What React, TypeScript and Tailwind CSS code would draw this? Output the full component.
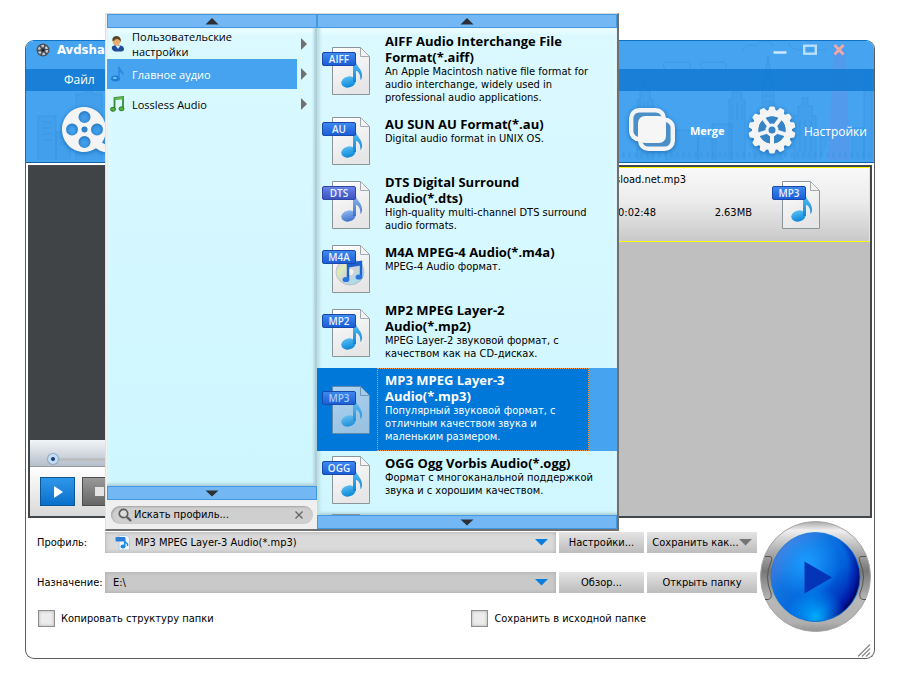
import type { ReactNode } from "react";

type Kind = "note" | "disc";

function FileIcon({ tag, kind = "note", dim = false }: { tag: string; kind?: Kind; dim?: boolean }) {
  const id = `${tag.toLowerCase()}${dim ? "-dim" : ""}`;
  const violet = tag === "DTS";
  return (
    <svg viewBox="0 0 48 48" className="block h-12 w-12 shrink-0" aria-hidden="true">
      <defs>
        <linearGradient id={`page-${id}`} x1="0" y1="0" x2="0.4" y2="1">
          <stop offset="0" stopColor="#ffffff" />
          <stop offset="1" stopColor="#e6e6e6" />
        </linearGradient>
        <linearGradient id={`tag-${id}`} x1="0" y1="0" x2="0" y2="1">
          <stop offset="0" stopColor={violet ? "#6a86e6" : "#3f8af0"} />
          <stop offset="1" stopColor={violet ? "#3a50c0" : "#1a5cd6"} />
        </linearGradient>
        <linearGradient id={`note-${id}`} x1="0" y1="0" x2="0" y2="1">
          <stop offset="0" stopColor={violet ? "#8fb8ee" : "#56bcf2"} />
          <stop offset="1" stopColor={violet ? "#4070cc" : "#0c86d8"} />
        </linearGradient>
        <linearGradient id={`disc-${id}`} x1="0" y1="0" x2="1" y2="1">
          <stop offset="0" stopColor="#d9c7ee" />
          <stop offset="0.3" stopColor="#dcecb8" />
          <stop offset="0.55" stopColor="#cdd2d8" />
          <stop offset="0.8" stopColor="#a9dcea" />
          <stop offset="1" stopColor="#b0b6bc" />
        </linearGradient>
      </defs>
      <g opacity={dim ? 0.68 : 1}>
        <path d="M10.5 .5H38.5L47.5 9.5V47.5H10.5Z" fill={`url(#page-${id})`} stroke="#8b9499" />
        <path d="M38.5 .5V9.5H47.5Z" fill="#f4f4f4" stroke="#a3aaae" strokeLinejoin="round" />
      </g>
      {kind === "note" ? (
        <g opacity={dim ? 0.85 : 1}>
          <ellipse cx="26.5" cy="35" rx="7.3" ry="5.5" transform="rotate(-14 26.5 35)" fill={`url(#note-${id})`} />
          <path
            d="M31 16.5 34 15C34.5 19.5 40.5 22 40 29.5 39.8 31.2 39.3 32.3 38.5 33.3 38.5 28 37.2 25 34 23.8V35H31Z"
            fill={`url(#note-${id})`}
          />
        </g>
      ) : (
        <g>
          <ellipse cx="28" cy="27" rx="14" ry="13" fill={`url(#disc-${id})`} stroke="#b4bbc0" strokeWidth="0.8" />
          <ellipse cx="28" cy="27" rx="4" ry="3.7" fill="#f3f3f3" stroke="#c4c4c4" strokeWidth="0.6" />
          <path d="M26 19 39 17V32M26 19V34" fill="none" stroke="#1c62cf" strokeWidth="2.4" />
          <path d="M25 21 40 18.5" stroke="#1c62cf" strokeWidth="3.6" />
          <ellipse cx="24" cy="34.5" rx="3.4" ry="2.6" fill="#2b74dd" />
          <ellipse cx="37" cy="32" rx="3.4" ry="2.6" fill="#2b74dd" />
        </g>
      )}
      <rect x="0.5" y="5.5" width="33" height="13" rx="1.5" fill={`url(#tag-${id})`} stroke={violet ? "#3346a5" : "#1a49ab"} />
      <text
        x="17"
        y="15.5"
        textAnchor="middle"
        fill={dim ? "#a9cdf3" : "#e8f1ff"}
        fontSize="10"
        fontWeight="600"
        fontFamily="'Open Sans', sans-serif"
      >
        {tag}
      </text>
    </svg>
  );
}

function Skyline() {
  return (
    <svg
      viewBox="0 0 848 122"
      preserveAspectRatio="xMaxYMax slice"
      className="pointer-events-none absolute inset-0 h-full w-full"
      fill="none"
      stroke="#2f8edb"
      strokeOpacity="0.4"
      aria-hidden="true"
    >
      <path d="M802 120 807 22V12L810 8H817L820 14V24L824 120Z" fill="#7d7fe0" fillOpacity="0.24" stroke="none" />
      <g fill="#3b99e6" fillOpacity="0.35">
        <path d="M12 120V76H30V120M30 120V92H44V120M50 120V54H60V46H66V54H76V120M16 82H26M16 88H26M16 94H26M16 100H26M34 98H40M34 104H40" />
        <path d="M611 120V60H614V50H618V42H620V50H624V60H627V120M614 62V76M618 62V76M622 62V76" />
        <path d="M640 120V90H672V120M672 120V98H690V120M703 120V60H706V52H716V60H719V120M706 64V80M711 64V80M716 64V80" />
        <path d="M686 120V84H706V120M728 120V90H736V50L740 28 742 16 744 28 748 50V90H756V120M738 50H747M738 56H747M738 62H747" />
        <path d="M768 120V76H772V66H776V58H782V66H786V76H790V120M774 80V112M779 80V112M785 80V112M794 120V96H804M826 120V88H838V120M838 120V30H846V120" />
      </g>
      <path d="M640 30H662Q668 26 661 22H642Q634 22 640 30ZM678 30H698Q704 26 697 22H678Q670 22 678 30ZM716 12Q720 2 730 6 740-4 748 6M764 2Q760 10 780 10H800" />
      <path strokeDasharray="3 3" d="M560 115H846" strokeWidth="5" strokeOpacity="0.25" />
    </svg>
  );
}

function Reel() {
  return (
    <svg viewBox="0 0 44 46" className="block h-[46px] w-11" aria-hidden="true">
      <path
        fillRule="evenodd"
        fill="#f4f4f4"
        d="M22 0C34 0 44 10 44 22.5C44 28 42.5 32 40 35.5L44 38V45C38 45 36 42 34 41.2C30.5 43.6 26 45 22 45C10 45 0 35 0 22.5C0 10 10 0 22 0ZM22.5 4A6 6 0 1 0 22.5 16A6 6 0 1 0 22.5 4ZM22.5 29A6 6 0 1 0 22.5 41A6 6 0 1 0 22.5 29ZM10 16.5A6 6 0 1 0 10 28.5A6 6 0 1 0 10 16.5ZM35 16.5A6 6 0 1 0 35 28.5A6 6 0 1 0 35 16.5ZM22.5 19.5A3 3 0 1 0 22.5 25.5A3 3 0 1 0 22.5 19.5Z"
      />
    </svg>
  );
}

function MergeIcon() {
  return (
    <svg viewBox="0 0 46 44" className="block h-11 w-[46px] shrink-0" aria-hidden="true">
      <rect x="2.2" y="2.2" width="32.6" height="29" rx="8" fill="#4c8fc6" stroke="#f4f4f4" strokeWidth="4.4" />
      <rect x="11.2" y="11.8" width="32.6" height="29" rx="8" fill="#4c8fc6" stroke="#f4f4f4" strokeWidth="4.4" />
      <rect x="9" y="8" width="28" height="27" rx="7" fill="#f6f6f6" />
    </svg>
  );
}

const TEETH = Array.from({ length: 14 }, (_, i) => (i * 360) / 14);
const SPOKES = [0, 72, 144, 216, 288];

function Gear() {
  return (
    <svg viewBox="0 0 48 48" className="block h-12 w-12 shrink-0" aria-hidden="true">
      <g transform="translate(24 24)">
        {TEETH.map((a) => (
          <path key={a} d="M-4.2-18-2.8-22.5Q-2.4-23.5-1.4-23.5H1.4Q2.4-23.5 2.8-22.5L4.2-18Z" fill="#f4f4f4" transform={`rotate(${a})`} />
        ))}
        <circle r="16.8" fill="none" stroke="#f4f4f4" strokeWidth="6.6" />
        <circle r="13.5" fill="#3584c6" />
        {SPOKES.map((a) => (
          <path key={a} d="M0-5V-15" stroke="#f4f4f4" strokeWidth="4" transform={`rotate(${a + 36})`} />
        ))}
        <circle r="5" fill="#3584c6" stroke="#f4f4f4" strokeWidth="3" />
      </g>
    </svg>
  );
}

function PlayBall() {
  return (
    <svg viewBox="0 0 111 111" className="block h-[111px] w-[111px]" aria-hidden="true">
      <defs>
        <linearGradient id="ring" x1="0" y1="0" x2="0" y2="1">
          <stop offset="0" stopColor="#a8a8a8" />
          <stop offset="0.08" stopColor="#efefef" />
          <stop offset="0.25" stopColor="#b4b4b4" />
          <stop offset="0.45" stopColor="#787878" />
          <stop offset="0.72" stopColor="#b8b8b8" />
          <stop offset="0.92" stopColor="#b0b0b0" />
          <stop offset="1" stopColor="#929292" />
        </linearGradient>
        <linearGradient id="ball" x1="0.2" y1="0.1" x2="0.9" y2="0.75">
          <stop offset="0" stopColor="#4a7cdc" />
          <stop offset="0.3" stopColor="#0f74e0" />
          <stop offset="0.65" stopColor="#0062dc" />
          <stop offset="1" stopColor="#0020b0" />
        </linearGradient>
        <radialGradient id="glowTop" cx="0.4" cy="0.34" r="0.38">
          <stop offset="0" stopColor="#1a9cff" />
          <stop offset="1" stopColor="#1a9cff" stopOpacity="0" />
        </radialGradient>
        <radialGradient id="glowBottom" cx="0.5" cy="0.95" r="0.34">
          <stop offset="0" stopColor="#00b0ff" />
          <stop offset="1" stopColor="#00a0ff" stopOpacity="0" />
        </radialGradient>
        <radialGradient id="shade" cx="0.35" cy="0.42" r="0.68">
          <stop offset="0.75" stopColor="#0018b0" stopOpacity="0" />
          <stop offset="0.9" stopColor="#000c90" stopOpacity="0.65" />
          <stop offset="1" stopColor="#000030" />
        </radialGradient>
      </defs>
      <circle cx="55.5" cy="55.5" r="55" fill="url(#ring)" stroke="#a5a5a5" />
      <path d="M5 35.5H10Q13 36 11 41Q4 56 11 72Q12 78 8 78.5H5M106 35.5H101Q98 36 100 41Q107 56 100 72Q99 78 103 78.5H106" fill="none" stroke="#555" />
      <circle cx="55.5" cy="56" r="44.5" fill="url(#ball)" />
      <circle cx="55.5" cy="56" r="44.5" fill="url(#glowTop)" />
      <circle cx="55.5" cy="56" r="44.5" fill="url(#shade)" />
      <circle cx="55.5" cy="56" r="44.5" fill="url(#glowBottom)" stroke="#1277d8" strokeWidth="0.8" />
      <path d="M44.5 40.5 72 56.5 44.5 72.5Z" fill="#0434b8" />
    </svg>
  );
}

function Tri({ dir }: { dir: "up" | "down" }) {
  return (
    <svg viewBox="0 0 14 7" className="block h-[7px] w-3.5" aria-hidden="true">
      <path d={dir === "up" ? "M7 0 13.5 6.5H.5Z" : "M7 6.5 13.5 .5H.5Z"} fill="#2d3136" />
    </svg>
  );
}

function ScrollBar({ dir, label }: { dir: "up" | "down"; label: string }) {
  return (
    <button
      type="button"
      aria-label={label}
      className="flex h-3.5 w-full shrink-0 items-center justify-center border border-[#4299e2] bg-[#73b8f4]"
    >
      <Tri dir={dir} />
    </button>
  );
}

const CATEGORIES: { text: string; on: boolean; icon: ReactNode }[] = [
  {
    text: "Пользовательские\nнастройки",
    on: false,
    icon: (
      <svg viewBox="0 0 16 16" className="h-4 w-4" aria-hidden="true">
        <path d="M2 10.5Q7 7 13 10.5Q15.5 14 12 15.5H5Q1 14 2 10.5Z" fill="#1d4d96" />
        <path d="M5 9 8 13 10.5 9.5Z" fill="#dbe8f7" />
        <ellipse cx="6.5" cy="5" rx="4" ry="4.6" fill="#e6b06c" />
        <path d="M2.5 5Q1.5 .5 6.5 0Q11.5 .5 10.8 6Q9.5 2.8 6 3Q4.5 5 2.5 5Z" fill="#5e4425" />
      </svg>
    ),
  },
  {
    text: "Главное аудио",
    on: true,
    icon: (
      <svg viewBox="0 0 16 16" className="h-4 w-4" aria-hidden="true">
        <ellipse cx="5.5" cy="12.5" rx="4.5" ry="3" fill="#1d7ed6" />
        <path d="M8.2 12.5V1L9.8 .5C10 4 14.5 5 13.5 9.5C12.5 7.5 11 6.5 9.8 6.5V12.5Z" fill="#2a8be0" />
        <ellipse cx="4.8" cy="12" rx="2" ry="1" fill="#7cc4f7" />
      </svg>
    ),
  },
  {
    text: "Lossless Audio",
    on: false,
    icon: (
      <svg viewBox="0 0 16 16" className="h-4 w-4" aria-hidden="true">
        <path d="M4.5 13V2L13 1V12.5" fill="none" stroke="#3a8a34" strokeWidth="1.8" />
        <path d="M4.5 3 13 2" stroke="#5fb54f" strokeWidth="2.6" />
        <ellipse cx="3" cy="13.3" rx="2.5" ry="2" fill="#52b43e" stroke="#2d7a2a" />
        <ellipse cx="11.5" cy="12.8" rx="2.5" ry="2" fill="#52b43e" stroke="#2d7a2a" />
      </svg>
    ),
  },
];

const FORMATS: { tag: string; title: string; desc: string; kind?: Kind; on?: boolean }[] = [
  {
    tag: "AIFF",
    title: "AIFF Audio Interchange File\nFormat(*.aiff)",
    desc: "An Apple Macintosh native file format for\naudio interchange, widely used in\nprofessional audio applications.",
  },
  { tag: "AU", title: "AU SUN AU Format(*.au)", desc: "Digital audio format in UNIX OS." },
  { tag: "DTS", title: "DTS Digital Surround\nAudio(*.dts)", desc: "High-quality multi-channel DTS surround\naudio formats." },
  { tag: "M4A", title: "M4A MPEG-4 Audio(*.m4a)", desc: "MPEG-4 Audio формат.", kind: "disc" },
  { tag: "MP2", title: "MP2 MPEG Layer-2\nAudio(*.mp2)", desc: "MPEG Layer-2 звуковой формат, с\nкачеством как на CD-дисках." },
  {
    tag: "MP3",
    title: "MP3 MPEG Layer-3\nAudio(*.mp3)",
    desc: "Популярный звуковой формат, с\nотличным качеством звука и\nмаленьким размером.",
    on: true,
  },
  { tag: "OGG", title: "OGG Ogg Vorbis Audio(*.ogg)", desc: "Формат с многоканальной поддержкой\nзвука и с хорошим качеством." },
];

function ProfilePopup() {
  return (
    <div className="absolute -top-7 left-[79px] z-10 flex h-[518px] w-[514px] border-t border-r-2 border-b-2 border-l border-[#707070] border-t-[#d9d9d9] border-l-[#e0e0e0] bg-[#f2f2f2]">
      <div className="flex w-[211px] shrink-0 flex-col pl-px">
        <ScrollBar dir="up" label="Прокрутить категории вверх" />
        <div className="flex-1 bg-linear-to-b from-[#dbf9ff] to-[#cdf6ff] pt-px shadow-[inset_-4px_0_3px_-1px_#a9cdd5,inset_0_-3px_3px_-1px_#a9cdd5,inset_0_4px_5px_#effdff]">
          {CATEGORIES.map((c) => (
            <button
              key={c.text}
              type="button"
              className={`flex h-[30px] w-full items-center text-left font-['Open_Sans',sans-serif] ${c.on ? "text-white" : "text-black"}`}
            >
              <span className={`flex h-full w-[190px] items-center gap-1.5 pl-[3px] ${c.on ? "bg-[#45a3ef]" : ""}`}>
                {c.icon}
                <span className="text-[11px] leading-[15px] whitespace-pre">{c.text}</span>
              </span>
              <svg viewBox="0 0 6 12" className="ml-1 h-3 w-1.5" aria-hidden="true">
                <path d="M0 0 6 6 0 12Z" fill="#707070" />
              </svg>
            </button>
          ))}
        </div>
        <ScrollBar dir="down" label="Прокрутить категории вниз" />
        <div className="flex h-[29px] shrink-0 items-center bg-[#efefef] px-1">
          <label className="flex h-[18px] w-full items-center rounded-full bg-[#cfcfcf] pr-2.5 pl-[7px] shadow-[inset_1px_1px_2px_#a2a2a2]">
            <svg viewBox="0 0 14 14" className="h-3.5 w-3.5 shrink-0" aria-hidden="true">
              <circle cx="5.5" cy="5.5" r="4.2" fill="#dcdcdc" stroke="#5d5d5d" strokeWidth="1.7" />
              <path d="M8.8 8.8 13 13" stroke="#5d5d5d" strokeWidth="2.4" />
            </svg>
            <input
              type="text"
              aria-label="Искать профиль"
              defaultValue="Искать профиль..."
              className="w-full min-w-0 flex-1 bg-transparent pl-0.5 text-[11px] text-black outline-none"
            />
            <button type="button" aria-label="Очистить поиск" className="block">
              <svg viewBox="0 0 8 8" className="h-2 w-2" aria-hidden="true">
                <path d="M.5 .5 7.5 7.5M7.5 .5 .5 7.5" stroke="#666" strokeWidth="1.4" />
              </svg>
            </button>
          </label>
        </div>
      </div>
      <div className="flex min-w-0 flex-1 flex-col">
        <ScrollBar dir="up" label="Прокрутить форматы вверх" />
        <div className="min-h-0 flex-1 overflow-hidden bg-linear-to-b from-[#dbf9ff] to-[#d0f7ff] pt-px shadow-[inset_4px_0_3px_-1px_#bfdfe5,inset_0_-3px_3px_-1px_#a9cdd5,inset_0_4px_5px_#effdff]">
          {FORMATS.map((f) => (
            <button key={f.tag} type="button" className={`flex w-full text-left ${f.on ? "bg-[#45a3ef]" : ""}`}>
              <span className={`flex w-[272px] ${f.on ? "bg-[#0078d9]" : ""}`}>
                <span className="flex w-[60px] shrink-0 items-center pl-[5px]">
                  <FileIcon tag={f.tag} kind={f.kind} dim={f.on} />
                </span>
                <span
                  className={`flex min-h-[58px] flex-1 flex-col border border-dotted pt-[3px] pb-[7px] pl-[7px] whitespace-pre ${
                    f.on ? "border-[#ff9a40] border-l-[#8fb4d0] text-white" : "border-transparent text-black"
                  }`}
                >
                  <span className="font-['Open_Sans',sans-serif] text-[13px] leading-4 font-bold">{f.title}</span>
                  <span className="text-[11px] leading-[13px]">{f.desc}</span>
                </span>
              </span>
            </button>
          ))}
          <div className="mt-[5px] ml-[15px] h-12 w-7 border border-[#8b9499] bg-white" />
        </div>
        <ScrollBar dir="down" label="Прокрутить форматы вниз" />
      </div>
    </div>
  );
}

function Drop({ color }: { color: string }) {
  return (
    <svg viewBox="0 0 13 7" className="pointer-events-none h-[7px] w-[13px] shrink-0" aria-hidden="true">
      <path d="M0 0H13L6.5 6.5Z" fill={color} />
    </svg>
  );
}

const FIELD = "grid h-[21px] flex-1 grid-cols-[1fr_auto] items-center pr-2 shadow-[inset_0_0_4px_#a8a8a8]";
const SELECT = "col-span-2 col-start-1 row-start-1 h-full w-full appearance-none bg-transparent text-[11px] outline-none";
const BUTTON =
  "flex h-[21px] items-center justify-center bg-linear-to-b from-[#e4e4e4] to-[#bcbcbc] text-[11px] whitespace-nowrap";

function Check({ children }: { children: ReactNode }) {
  return (
    <label className="flex items-center gap-1.5">
      <input
        type="checkbox"
        className="h-[17px] w-[17px] appearance-none border border-[#8f8f8f] bg-[#ececec] shadow-[inset_0_0_3px_#aaa]"
      />
      {children}
    </label>
  );
}

export default function App() {
  return (
    <div className="min-h-screen bg-white pt-10 pr-[31px] pb-9 pl-[25px] font-['DejaVu_Sans_Condensed','DejaVu_Sans',sans-serif] text-[11px] leading-[14px] text-black">
      <div className="relative rounded-[9px] border border-[#5e5e5e] border-t-[#0f72c4] bg-white">
        <header className="relative overflow-hidden rounded-t-lg border-b border-[#1163a8] bg-[#45a3ef] text-white">
          <Skyline />
          <div className="relative flex h-7 items-start justify-between pt-px pr-[29px] pl-2.5">
            <div className="flex items-center gap-[7px]">
              <svg viewBox="0 0 14 14" className="h-3.5 w-3.5" aria-hidden="true">
                <circle cx="7" cy="7" r="6.5" fill="#4a4f57" />
                <circle cx="7" cy="7" r="4" fill="none" stroke="#c3c9d0" strokeWidth="2.4" strokeDasharray="2.5 1.7" />
                <circle cx="7" cy="7" r="1.5" fill="#222" />
              </svg>
              <h1 className="text-[13px] leading-4 font-bold">Avdsha</h1>
            </div>
            <div className="flex gap-4 pt-0.5">
              <button type="button" aria-label="Свернуть" className="block">
                <svg viewBox="0 0 14 12" className="h-3 w-3.5" aria-hidden="true">
                  <path d="M.5 8.5H13.5" stroke="#cfe9fb" strokeWidth="2.6" />
                </svg>
              </button>
              <button type="button" aria-label="Развернуть" className="block">
                <svg viewBox="0 0 14 12" className="h-3 w-3.5" aria-hidden="true">
                  <rect x="1.2" y="1.7" width="11.6" height="8" fill="none" stroke="#b9e0fb" strokeWidth="2.4" />
                </svg>
              </button>
              <button type="button" aria-label="Закрыть" className="block">
                <svg viewBox="0 0 12 12" className="h-3 w-3" aria-hidden="true">
                  <path d="M1.5 1 10.5 10.5M10.5 1 1.5 10.5" stroke="#f2a9a2" strokeWidth="2.8" />
                </svg>
              </button>
            </div>
          </div>
          <nav className="relative flex h-[22px] items-center bg-[#147bd4]/90 pl-[38px] font-['Open_Sans',sans-serif]">
            <button type="button" className="text-xs">Файл</button>
          </nav>
          <div className="relative flex h-[71px] items-center justify-between pt-1.5 pr-2.5 pl-9">
            <button type="button" aria-label="Добавить видео" className="drop-shadow-[0_1px_2px_#1c6cb3]">
              <Reel />
            </button>
            <div className="flex items-center gap-6">
              <button type="button" className="flex items-center gap-[15px] text-xs font-bold">
                <span className="drop-shadow-[0_1px_2px_#1c6cb3]"><MergeIcon /></span>
                <span className="w-[34px] pt-1 font-['Open_Sans',sans-serif] text-[11px]">Merge</span>
              </button>
              <button type="button" className="flex items-center gap-2 font-['Open_Sans',sans-serif] text-xs">
                <span className="drop-shadow-[0_1px_2px_#1c6cb3]"><Gear /></span>
                <span className="w-[60px] pt-1 whitespace-nowrap">Настройки</span>
              </button>
            </div>
          </div>
        </header>

        <main className="mx-0.5 mt-0.5 flex h-[353px] border-2 border-[#42474c]">
          <section className="flex w-[290px] shrink-0 flex-col">
            <div className="flex-1 bg-[#404447]" />
            <div className="flex h-[26px] items-center bg-linear-to-b from-[#f2f5f8] to-[#b5bfcb] pt-3 pl-[18px]">
              <input
                type="range"
                aria-label="Позиция"
                defaultValue={0}
                className="h-[3px] w-60 appearance-none bg-[#bcbec0] [&::-webkit-slider-thumb]:h-2.5 [&::-webkit-slider-thumb]:w-2.5 [&::-webkit-slider-thumb]:appearance-none [&::-webkit-slider-thumb]:rounded-full [&::-webkit-slider-thumb]:border-[3px] [&::-webkit-slider-thumb]:border-[#c3dcf2] [&::-webkit-slider-thumb]:bg-[#123e74] [&::-webkit-slider-thumb]:shadow-[0_0_1px_1px_#8ba6c2]"
              />
            </div>
            <div className="flex h-[50px] items-center gap-[7px] border-t border-[#999] bg-linear-to-b from-white to-[#d9d9d9] pl-2.5">
              <button
                type="button"
                aria-label="Воспроизвести"
                className="flex h-[29px] w-[35px] items-center justify-center border border-[#0b5695] bg-linear-to-b from-[#2f97ea] to-[#0670cc]"
              >
                <svg viewBox="0 0 9 12" className="ml-0.5 h-3 w-[9px]" aria-hidden="true">
                  <path d="M0 0 9 6 0 12Z" fill="#fff" />
                </svg>
              </button>
              <button
                type="button"
                aria-label="Остановить"
                className="flex h-[29px] w-[35px] items-center justify-center border border-[#4d4d4d] bg-linear-to-b from-[#999] to-[#666]"
              >
                <span className="h-[9px] w-[9px] bg-[#e4e4e4]" />
              </button>
            </div>
          </section>
          <section className="min-w-0 flex-1 bg-[#bfbfbf]">
            <div className="flex h-[75px] items-center justify-end border border-[#ffff00] bg-linear-to-b from-[#f9f9f9] via-[#ececec] via-45% to-[#c9c9c9] pr-[49px]">
              <div className="mr-5 flex w-[137px] flex-col gap-[19px] pb-4">
                <div>sload.net.mp3</div>
                <div className="flex justify-between pl-[3px]">
                  <span>0:02:48</span>
                  <span>2.63MB</span>
                </div>
              </div>
              <FileIcon tag="MP3" />
            </div>
          </section>
        </main>

        <div className="flex gap-[3px] pr-[3px] pl-[11px]">
          <form className="flex min-w-0 flex-1 flex-col pt-3.5">
            <div className="flex items-center gap-[3px]">
              <label htmlFor="profile" className="w-[65px]">Профиль:</label>
              <div className={`${FIELD} bg-[#dadada]`}>
                <select id="profile" className={`${SELECT} pl-[30px]`}>
                  <option>MP3 MPEG Layer-3 Audio(*.mp3)</option>
                </select>
                <svg viewBox="0 0 16 16" className="pointer-events-none col-start-1 row-start-1 ml-2.5 h-4 w-4" aria-hidden="true">
                  <path d="M4 .5H12L14.5 3V15H4Z" fill="#f2f7fb" stroke="#b4cbdf" />
                  <rect x="0.5" y="2" width="10" height="4.5" rx="1" fill="#2b7fdb" />
                  <ellipse cx="8" cy="11.5" rx="2.5" ry="2" fill="#1f8ce0" />
                  <path d="M9.7 11.5V6.5L12.5 9V11" fill="none" stroke="#1f8ce0" strokeWidth="1.5" />
                </svg>
                <span className="pointer-events-none col-start-2 row-start-1"><Drop color="#0a7ee0" /></span>
              </div>
              <button type="button" className={`${BUTTON} w-[85px]`}>Настройки...</button>
              <button type="button" className={`${BUTTON} w-[110px]`}>
                Сохранить как...
                <Drop color="#757575" />
              </button>
            </div>
            <div className="mt-[19px] flex items-center gap-[3px]">
              <label htmlFor="target" className="w-[65px]">Назначение:</label>
              <div className={`${FIELD} bg-[#c9c9c9]`}>
                <select id="target" className={`${SELECT} pl-2`}>
                  <option>E:\</option>
                </select>
                <span className="pointer-events-none col-start-2 row-start-1"><Drop color="#0a7ee0" /></span>
              </div>
              <button type="button" className={`${BUTTON} w-[85px]`}>Обзор...</button>
              <button type="button" className={`${BUTTON} w-[110px]`}>Открыть папку</button>
            </div>
            <div className="mt-[17px] grid grid-cols-[3fr_2fr] gap-x-[5px] pl-px">
              <Check>Копировать структуру папки</Check>
              <Check>Сохранить в исходной папке</Check>
            </div>
          </form>
          <button type="button" aria-label="Конвертировать" className="mt-[3px] block rounded-full">
            <PlayBall />
          </button>
        </div>
        <div className="flex h-[26px] items-end justify-end pr-[3px] pb-px">
          <svg viewBox="0 0 13 13" className="h-[13px] w-[13px]" stroke="#8c8c8c" aria-hidden="true">
            <path d="M0 12.5 12 .5M4 12.5 12 4.5M8 12.5 12 8.5" strokeWidth="1.3" />
          </svg>
        </div>

        <ProfilePopup />
      </div>
    </div>
  );
}
